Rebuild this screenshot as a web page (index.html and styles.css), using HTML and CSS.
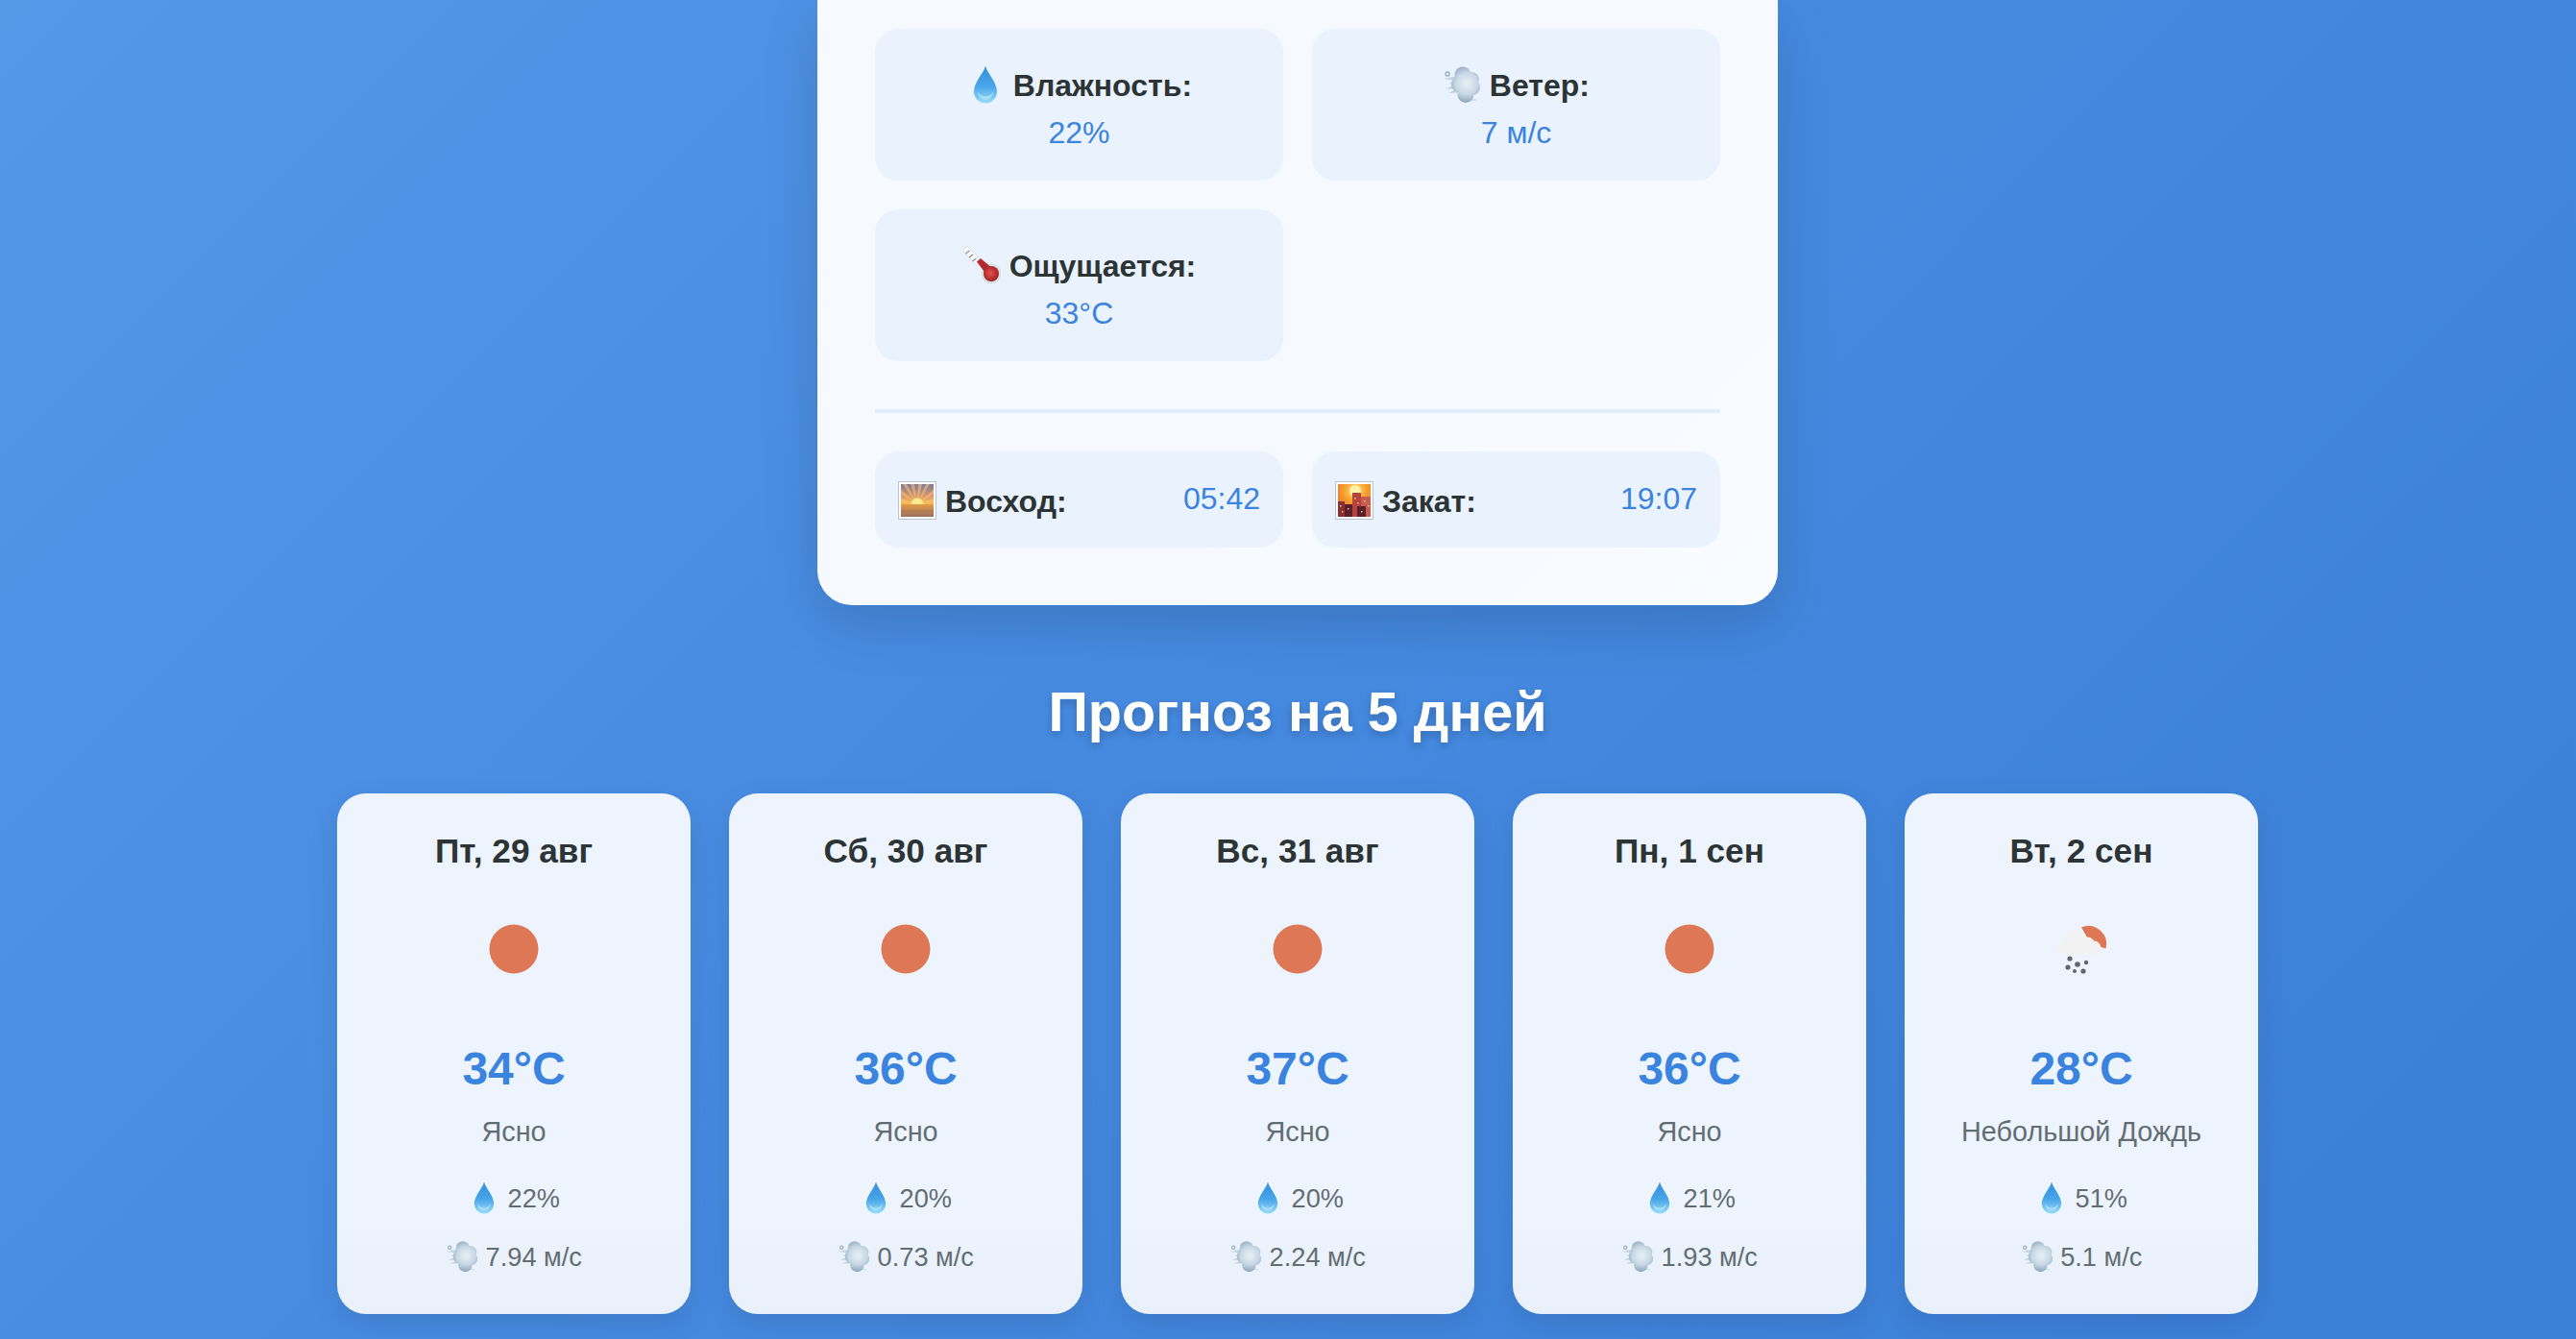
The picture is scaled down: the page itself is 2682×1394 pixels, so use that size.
FILE: index.html
```html
<!DOCTYPE html>
<html lang="ru">
<head>
  <meta charset="UTF-8">
  <meta name="viewport" content="width=device-width, initial-scale=1.0">
  <title>Прогноз погоды</title>
  <link rel="stylesheet" href="styles.css">
</head>
<body>
  <svg class="sprites" width="0" height="0">
    <defs>
      <linearGradient id="dropFill" x1="0" y1="0" x2="0" y2="1">
        <stop offset="0" stop-color="#2f8ddc"/>
        <stop offset="0.55" stop-color="#4aa6ea"/>
        <stop offset="1" stop-color="#9adcf9"/>
      </linearGradient>
      <radialGradient id="puffFill" gradientUnits="userSpaceOnUse" cx="25" cy="19" r="20">
        <stop offset="0" stop-color="#e8f0f7"/>
        <stop offset="0.55" stop-color="#c9d9e6"/>
        <stop offset="1" stop-color="#8da6bb"/>
      </radialGradient>
      <radialGradient id="bulbFill" cx="0.45" cy="0.45" r="0.55">
        <stop offset="0" stop-color="#e8504e"/>
        <stop offset="1" stop-color="#a02022"/>
      </radialGradient>
      <linearGradient id="dawnSky" x1="0" y1="0" x2="0" y2="1">
        <stop offset="0" stop-color="#7d7898"/>
        <stop offset="0.35" stop-color="#d8966e"/>
        <stop offset="0.6" stop-color="#f8bb50"/>
        <stop offset="0.63" stop-color="#e09a44"/>
        <stop offset="1" stop-color="#9a7062"/>
      </linearGradient>
      <radialGradient id="duskSky" gradientUnits="userSpaceOnUse" cx="21" cy="10" r="26">
        <stop offset="0" stop-color="#ffe27a"/>
        <stop offset="0.45" stop-color="#f9a02c"/>
        <stop offset="1" stop-color="#e8602e"/>
      </radialGradient>
    </defs>

    <symbol id="drop" viewBox="0 0 40 40">
      <path d="M20 .5C21.500 8 32 17 32 27.500a12 12 0 0 1-24 0C8 17 18.500 8 20 .5z" fill="url(#dropFill)"/>
      <path d="M12 27c0 5 3.500 9 8 9s8-4 8-9c-1 3-4 5-8 5s-7-2-8-5z" fill="#b5e6fb" opacity=".7"/>
    </symbol>

    <symbol id="wind" viewBox="0 0 40 40">
      <path d="M1 14l14 2-9 3 10 1-13 4 11 1-8 4 14-1V10z" fill="#b7c9d8" opacity=".8"/>
      <circle cx="5" cy="9" r="2" fill="none" stroke="#94abbe" stroke-width="1.300"/>
      <path d="M14 4h14M26 36h9" stroke="#b7c9d8" stroke-width="1" opacity=".8"/>
      <g fill="url(#puffFill)">
        <circle cx="21" cy="10" r="8.500"/>
        <circle cx="30" cy="15" r="8"/>
        <circle cx="31" cy="23" r="8"/>
        <circle cx="24" cy="30.500" r="8.500"/>
        <circle cx="18" cy="20" r="9"/>
      </g>
    </symbol>

    <symbol id="thermo" viewBox="0 0 40 40">
      <circle cx="30" cy="29" r="10.500" fill="#cfd5da" opacity=".6"/>
      <path d="M5 0 0 4.500 15 21l6-5z" fill="#f8f9fa" stroke="#c9ced2" stroke-width=".6"/>
      <path d="M3.500 8l4-3M7 12l4-3M10.500 16l4-3" stroke="#8d9499" stroke-width="1.300"/>
      <path d="M15 16.500 19 13 32 24 26 31z" fill="#b5282a"/>
      <circle cx="30" cy="29" r="8" fill="url(#bulbFill)"/>
    </symbol>

    <symbol id="sunrise" viewBox="0 0 40 40">
      <rect x=".5" y=".5" width="39" height="39" fill="#fff" stroke="#b9c4cf"/>
      <rect x="3" y="3" width="34" height="34" fill="url(#dawnSky)"/>
      <g fill="#f8c878" opacity=".55">
        <path d="M20 24 5 3h4zM20 24 13 3h4zM20 24 21 3h4zM20 24 29 3h4zM20 24 3 9v4zM20 24 37 9v4zM20 24 3 18v3zM20 24 37 18v3z"/>
      </g>
      <path d="M13.500 24a6.500 6.500 0 0 1 13 0z" fill="#ffe88e"/>
      <rect x="3" y="30" width="34" height="1.500" fill="#a8704f" opacity=".5"/>
    </symbol>

    <symbol id="sunset" viewBox="0 0 40 40">
      <rect x=".5" y=".5" width="39" height="39" fill="#fff" stroke="#b9c4cf"/>
      <rect x="3" y="3" width="34" height="34" fill="url(#duskSky)"/>
      <circle cx="21" cy="10" r="6" fill="#fff0a8"/>
      <rect x="3" y="21" width="7" height="16" fill="#8a3034"/>
      <rect x="10" y="24" width="8" height="13" fill="#5a1f2a"/>
      <rect x="18" y="12" width="9" height="25" fill="#b5443f"/>
      <rect x="27" y="16" width="10" height="21" fill="#c95a50"/>
      <rect x="23" y="26" width="9" height="11" fill="#5a1f2a"/>
      <g fill="#f5c96a">
        <rect x="5" y="25" width="1.500" height="1.500"/>
        <rect x="7" y="31" width="1.500" height="1.500"/>
        <rect x="20" y="17" width="1.500" height="1.500"/>
        <rect x="23" y="22" width="1.500" height="1.500"/>
        <rect x="13" y="28" width="1.500" height="1.500"/>
        <rect x="30" y="20" width="1.500" height="1.500"/>
        <rect x="34" y="25" width="1.500" height="1.500"/>
        <rect x="27" y="31" width="1.500" height="1.500"/>
      </g>
    </symbol>

    <symbol id="clear" viewBox="0 0 100 100">
      <circle cx="50" cy="50" r="25.500" fill="#dd7756"/>
    </symbol>

    <symbol id="rain" viewBox="0 0 100 100">
      <path d="M50 27.300A19 19 0 0 1 75.500 49.500L60 45z" fill="#dd7756"/>
      <g fill="#f2f2f2">
        <circle cx="32" cy="49" r="7"/>
        <circle cx="43" cy="42" r="12"/>
        <circle cx="56" cy="46" r="8.500"/>
        <circle cx="63" cy="49" r="7.500"/>
        <rect x="32" y="46" width="31" height="10"/>
      </g>
      <g fill="#62666c">
        <circle cx="38" cy="60" r="2.600"/>
        <circle cx="46" cy="66" r="2.800"/>
        <circle cx="55" cy="64" r="2.200"/>
        <circle cx="36" cy="69" r="2.600"/>
        <circle cx="43" cy="73" r="2"/>
        <circle cx="52" cy="73" r="2.600"/>
      </g>
    </symbol>
  </svg>

  <div class="page">
    <div class="current">
      <div class="stats">
        <div class="stat">
          <div class="stat-label"><svg class="emoji"><use href="#drop"/></svg> Влажность:</div>
          <div class="stat-value">22%</div>
        </div>
        <div class="stat">
          <div class="stat-label"><svg class="emoji"><use href="#wind"/></svg> Ветер:</div>
          <div class="stat-value">7 м/с</div>
        </div>
        <div class="stat">
          <div class="stat-label"><svg class="emoji"><use href="#thermo"/></svg> Ощущается:</div>
          <div class="stat-value">33°C</div>
        </div>
      </div>
      <div class="sun-times">
        <div class="sun-item">
          <div class="stat-label"><svg class="emoji"><use href="#sunrise"/></svg> Восход:</div>
          <div class="stat-value">05:42</div>
        </div>
        <div class="sun-item">
          <div class="stat-label"><svg class="emoji"><use href="#sunset"/></svg> Закат:</div>
          <div class="stat-value">19:07</div>
        </div>
      </div>
    </div>

    <h2 class="forecast-title">Прогноз на 5 дней</h2>

    <div class="forecast">
      <div class="day">
        <div class="day-date">Пт, 29 авг</div>
        <svg class="day-icon"><use href="#clear"/></svg>
        <div class="day-temp">34°C</div>
        <div class="day-desc">Ясно</div>
        <div class="day-detail"><svg class="emoji-sm"><use href="#drop"/></svg> 22%</div>
        <div class="day-detail"><svg class="emoji-sm"><use href="#wind"/></svg> 7.94 м/с</div>
      </div>
      <div class="day">
        <div class="day-date">Сб, 30 авг</div>
        <svg class="day-icon"><use href="#clear"/></svg>
        <div class="day-temp">36°C</div>
        <div class="day-desc">Ясно</div>
        <div class="day-detail"><svg class="emoji-sm"><use href="#drop"/></svg> 20%</div>
        <div class="day-detail"><svg class="emoji-sm"><use href="#wind"/></svg> 0.73 м/с</div>
      </div>
      <div class="day">
        <div class="day-date">Вс, 31 авг</div>
        <svg class="day-icon"><use href="#clear"/></svg>
        <div class="day-temp">37°C</div>
        <div class="day-desc">Ясно</div>
        <div class="day-detail"><svg class="emoji-sm"><use href="#drop"/></svg> 20%</div>
        <div class="day-detail"><svg class="emoji-sm"><use href="#wind"/></svg> 2.24 м/с</div>
      </div>
      <div class="day">
        <div class="day-date">Пн, 1 сен</div>
        <svg class="day-icon"><use href="#clear"/></svg>
        <div class="day-temp">36°C</div>
        <div class="day-desc">Ясно</div>
        <div class="day-detail"><svg class="emoji-sm"><use href="#drop"/></svg> 21%</div>
        <div class="day-detail"><svg class="emoji-sm"><use href="#wind"/></svg> 1.93 м/с</div>
      </div>
      <div class="day">
        <div class="day-date">Вт, 2 сен</div>
        <svg class="day-icon"><use href="#rain"/></svg>
        <div class="day-temp">28°C</div>
        <div class="day-desc">Небольшой Дождь</div>
        <div class="day-detail"><svg class="emoji-sm"><use href="#drop"/></svg> 51%</div>
        <div class="day-detail"><svg class="emoji-sm"><use href="#wind"/></svg> 5.1 м/с</div>
      </div>
    </div>
  </div>
</body>
</html>
```

FILE: styles.css
```css
html, body {
  height: 100%;
}

body {
  margin: 0;
  overflow: hidden;
  font-family: "Liberation Sans", Arial, sans-serif;
  color: #2d3436;
  background: linear-gradient(135deg, #5598e8 0%, #468ae0 45%, #3a7fd8 100%);
}

.sprites {
  display: block;
  height: 0;
}

.page {
  width: 2000px;
  padding-left: 351px;
}

.current {
  box-sizing: border-box;
  width: 1000px;
  height: 630px;
  margin: 0 auto;
  padding: 30px 60px 60px;
  background: linear-gradient(135deg, #f6faff 60%, #f9fbff);
  border-radius: 0 0 36px 36px;
  box-shadow: 0 20px 60px rgba(0, 0, 0, 0.14);
}

.stats {
  display: grid;
  grid-template-columns: repeat(2, 1fr);
  gap: 30px;
  padding-bottom: 50px;
  border-bottom: 4px solid #e2edfb;
}

.stat {
  height: 158px;
  box-sizing: border-box;
  padding-top: 33px;
  text-align: center;
  background: #eaf2fd;
  border-radius: 24px;
}

.stat-label {
  height: 52px;
  font-size: 32px;
  line-height: 52px;
  font-weight: bold;
}

.stat-value {
  font-size: 32px;
  line-height: 46px;
  color: #3a84e0;
}

.emoji {
  width: 40px;
  height: 40px;
  vertical-align: -8px;
}

.emoji-sm {
  width: 34px;
  height: 34px;
  vertical-align: -7px;
}

.sun-times {
  display: grid;
  grid-template-columns: repeat(2, 1fr);
  gap: 30px;
  margin-top: 40px;
}

.sun-item {
  display: flex;
  justify-content: space-between;
  height: 100px;
  box-sizing: border-box;
  padding: 26px 24px 0;
  background: #eaf2fd;
  border-radius: 24px;
}

.forecast-title {
  margin: 82px 0 56px;
  font-size: 57.6px;
  line-height: 58px;
  text-align: center;
  color: #fff;
  text-shadow: 0 4px 8px rgba(0, 0, 0, 0.2);
}

.forecast {
  display: grid;
  grid-template-columns: repeat(5, 1fr);
  gap: 40px;
}

.day {
  height: 542px;
  box-sizing: border-box;
  padding-top: 40px;
  text-align: center;
  background: linear-gradient(#edf4fe 80%, #e9f0fa);
  border-radius: 30px;
  box-shadow: 0 10px 30px rgba(0, 0, 0, 0.1);
}

.day-date {
  font-size: 35.2px;
  line-height: 40px;
  font-weight: bold;
}

.day-icon {
  display: block;
  width: 100px;
  height: 100px;
  margin: 32px auto 0;
}

.day-temp {
  margin-top: 47px;
  font-size: 48px;
  line-height: 56px;
  font-weight: bold;
  color: #3a84e0;
}

.day-desc {
  margin-top: 20px;
  font-size: 28.8px;
  line-height: 35px;
  color: #636e72;
}

.day-detail {
  margin-top: 21px;
  font-size: 27.2px;
  line-height: 40px;
  color: #636e72;
}

.day-desc + .day-detail {
  margin-top: 32px;
}
```
